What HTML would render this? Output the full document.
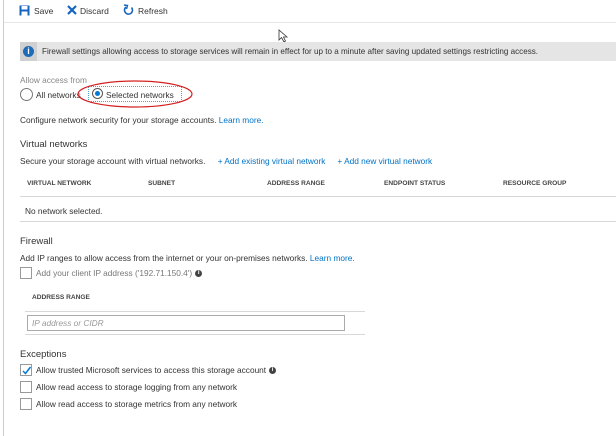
<!DOCTYPE html><html><head><style>
body{margin:0;width:616px;height:436px;background:#fff;font-family:"Liberation Sans",sans-serif;color:#333;position:relative;overflow:hidden}
.a{position:absolute;white-space:nowrap;font-size:8.3px}
.l{color:#0072c6}
.h{font-size:9.5px;color:#333}
.th{font-size:6.6px;font-weight:bold;color:#444}
.cb{position:absolute;width:10px;height:10px;border:1px solid #999;background:#fff}
.hr{position:absolute;height:1px;background:#d8d8d8}
.i{display:inline-block;width:7px;height:7px;border-radius:50%;background:#444;color:#fff;font-size:6px;text-align:center;line-height:7px;font-weight:bold;vertical-align:middle;margin-left:3px}
</style></head><body>
<div style="position:absolute;left:3px;top:0;width:1px;height:436px;background:#ccc"></div>
<div class="hr" style="left:4px;top:22px;width:612px;background:#e6e6e6"></div>
<svg style="position:absolute;left:19px;top:5px" width="11" height="11"><rect x="0.5" y="0.5" width="10" height="10" fill="#1565c0"/><rect x="2.5" y="1" width="6" height="3.5" fill="#fff"/><rect x="2.5" y="6.5" width="6" height="4" fill="#fff"/></svg>
<div class="a" style="left:34px;top:6px;font-size:8.5px">Save</div>
<svg style="position:absolute;left:67px;top:5px" width="10" height="10"><path d="M1 1L9 9M9 1L1 9" stroke="#1565c0" stroke-width="2.2"/></svg>
<div class="a" style="left:80px;top:6px;font-size:8.5px">Discard</div>
<svg style="position:absolute;left:123px;top:4px" width="11" height="12"><path d="M8.5 3.5A4 4 0 1 1 3 3" fill="none" stroke="#1565c0" stroke-width="1.6"/><path d="M1 1L4.5 1.5L3.5 5" fill="none" stroke="#1565c0" stroke-width="1.4"/></svg>
<div class="a" style="left:138px;top:6px;font-size:8.5px">Refresh</div>
<svg style="position:absolute;left:278px;top:29px" width="10" height="14"><path d="M1 1L1 11L3.5 8.5L6 13L7.5 12L5.5 8L9 8Z" fill="#fff" stroke="#333" stroke-width="0.8"/></svg>
<div style="position:absolute;left:20px;top:42px;width:596px;height:19px;background:#e5e5e5"></div>
<div style="position:absolute;left:20px;top:42px;width:17px;height:19px;background:#d0d0d0"></div>
<div style="position:absolute;left:23px;top:46px;width:11px;height:11px;border-radius:50%;background:#1e6bb8;color:#fff;font-size:9px;font-weight:bold;text-align:center;line-height:11px">i</div>
<div class="a" style="left:42px;top:47px;font-size:8.1px">Firewall settings allowing access to storage services will remain in effect for up to a minute after saving updated settings restricting access.</div>
<div class="a" style="left:20px;top:75px;color:#888">Allow access from</div>
<div style="position:absolute;left:20px;top:88px;width:11px;height:11px;border:1px solid #777;border-radius:50%"></div>
<div class="a" style="left:36px;top:90px">All networks</div>
<div style="position:absolute;left:88px;top:86px;width:92px;height:14px;border:1px dotted #4ac"></div>
<div style="position:absolute;left:92px;top:88px;width:9px;height:9px;border:1px solid #555;border-radius:50%"></div>
<div style="position:absolute;left:95px;top:91px;width:5px;height:5px;border-radius:50%;background:#0078d4"></div>
<div class="a" style="left:106px;top:90px">Selected networks</div>
<svg style="position:absolute;left:76px;top:78px" width="118" height="32"><ellipse cx="59" cy="16" rx="57" ry="13" fill="none" stroke="#d42020" stroke-width="1.2"/></svg>
<div class="a" style="left:20px;top:115px">Configure network security for your storage accounts. <span class="l">Learn more.</span></div>
<div class="a h" style="left:20px;top:139px">Virtual networks</div>
<div class="a" style="left:20px;top:156px">Secure your storage account with virtual networks. <span class="l" style="margin-left:10px">+ Add existing virtual network</span><span class="l" style="margin-left:12px">+ Add new virtual network</span></div>
<div class="a th" style="left:27px;top:180px">VIRTUAL NETWORK</div>
<div class="a th" style="left:148px;top:180px">SUBNET</div>
<div class="a th" style="left:267px;top:180px">ADDRESS RANGE</div>
<div class="a th" style="left:384px;top:180px">ENDPOINT STATUS</div>
<div class="a th" style="left:503px;top:180px">RESOURCE GROUP</div>
<div class="hr" style="left:20px;top:196px;width:596px"></div>
<div class="a" style="left:25px;top:206px">No network selected.</div>
<div class="hr" style="left:20px;top:221px;width:596px"></div>
<div class="a h" style="left:20px;top:236px">Firewall</div>
<div class="a" style="left:20px;top:253px">Add IP ranges to allow access from the internet or your on-premises networks. <span class="l">Learn more.</span></div>
<div class="cb" style="left:20px;top:267px"></div>
<div class="a" style="left:36px;top:268px;color:#777">Add your client IP address ('192.71.150.4')<span class="i">i</span></div>
<div class="a th" style="left:32px;top:294px">ADDRESS RANGE</div>
<div class="hr" style="left:25px;top:311px;width:340px"></div>
<div style="position:absolute;left:27px;top:315px;width:316px;height:14px;border:1px solid #aaa"></div>
<div class="a" style="left:32px;top:318px;font-style:italic;color:#999">IP address or CIDR</div>
<div class="hr" style="left:25px;top:334px;width:340px"></div>
<div class="a h" style="left:20px;top:349px">Exceptions</div>
<div class="cb" style="left:20px;top:364px"></div>
<svg style="position:absolute;left:21px;top:365px" width="11" height="11"><path d="M2 6L4.5 8.5L9.5 2" fill="none" stroke="#0078d4" stroke-width="1.5"/></svg>
<div class="a" style="left:36px;top:365px">Allow trusted Microsoft services to access this storage account<span class="i">i</span></div>
<div class="cb" style="left:20px;top:381px"></div>
<div class="a" style="left:36px;top:382px">Allow read access to storage logging from any network</div>
<div class="cb" style="left:20px;top:398px"></div>
<div class="a" style="left:36px;top:399px">Allow read access to storage metrics from any network</div>
</body></html>
